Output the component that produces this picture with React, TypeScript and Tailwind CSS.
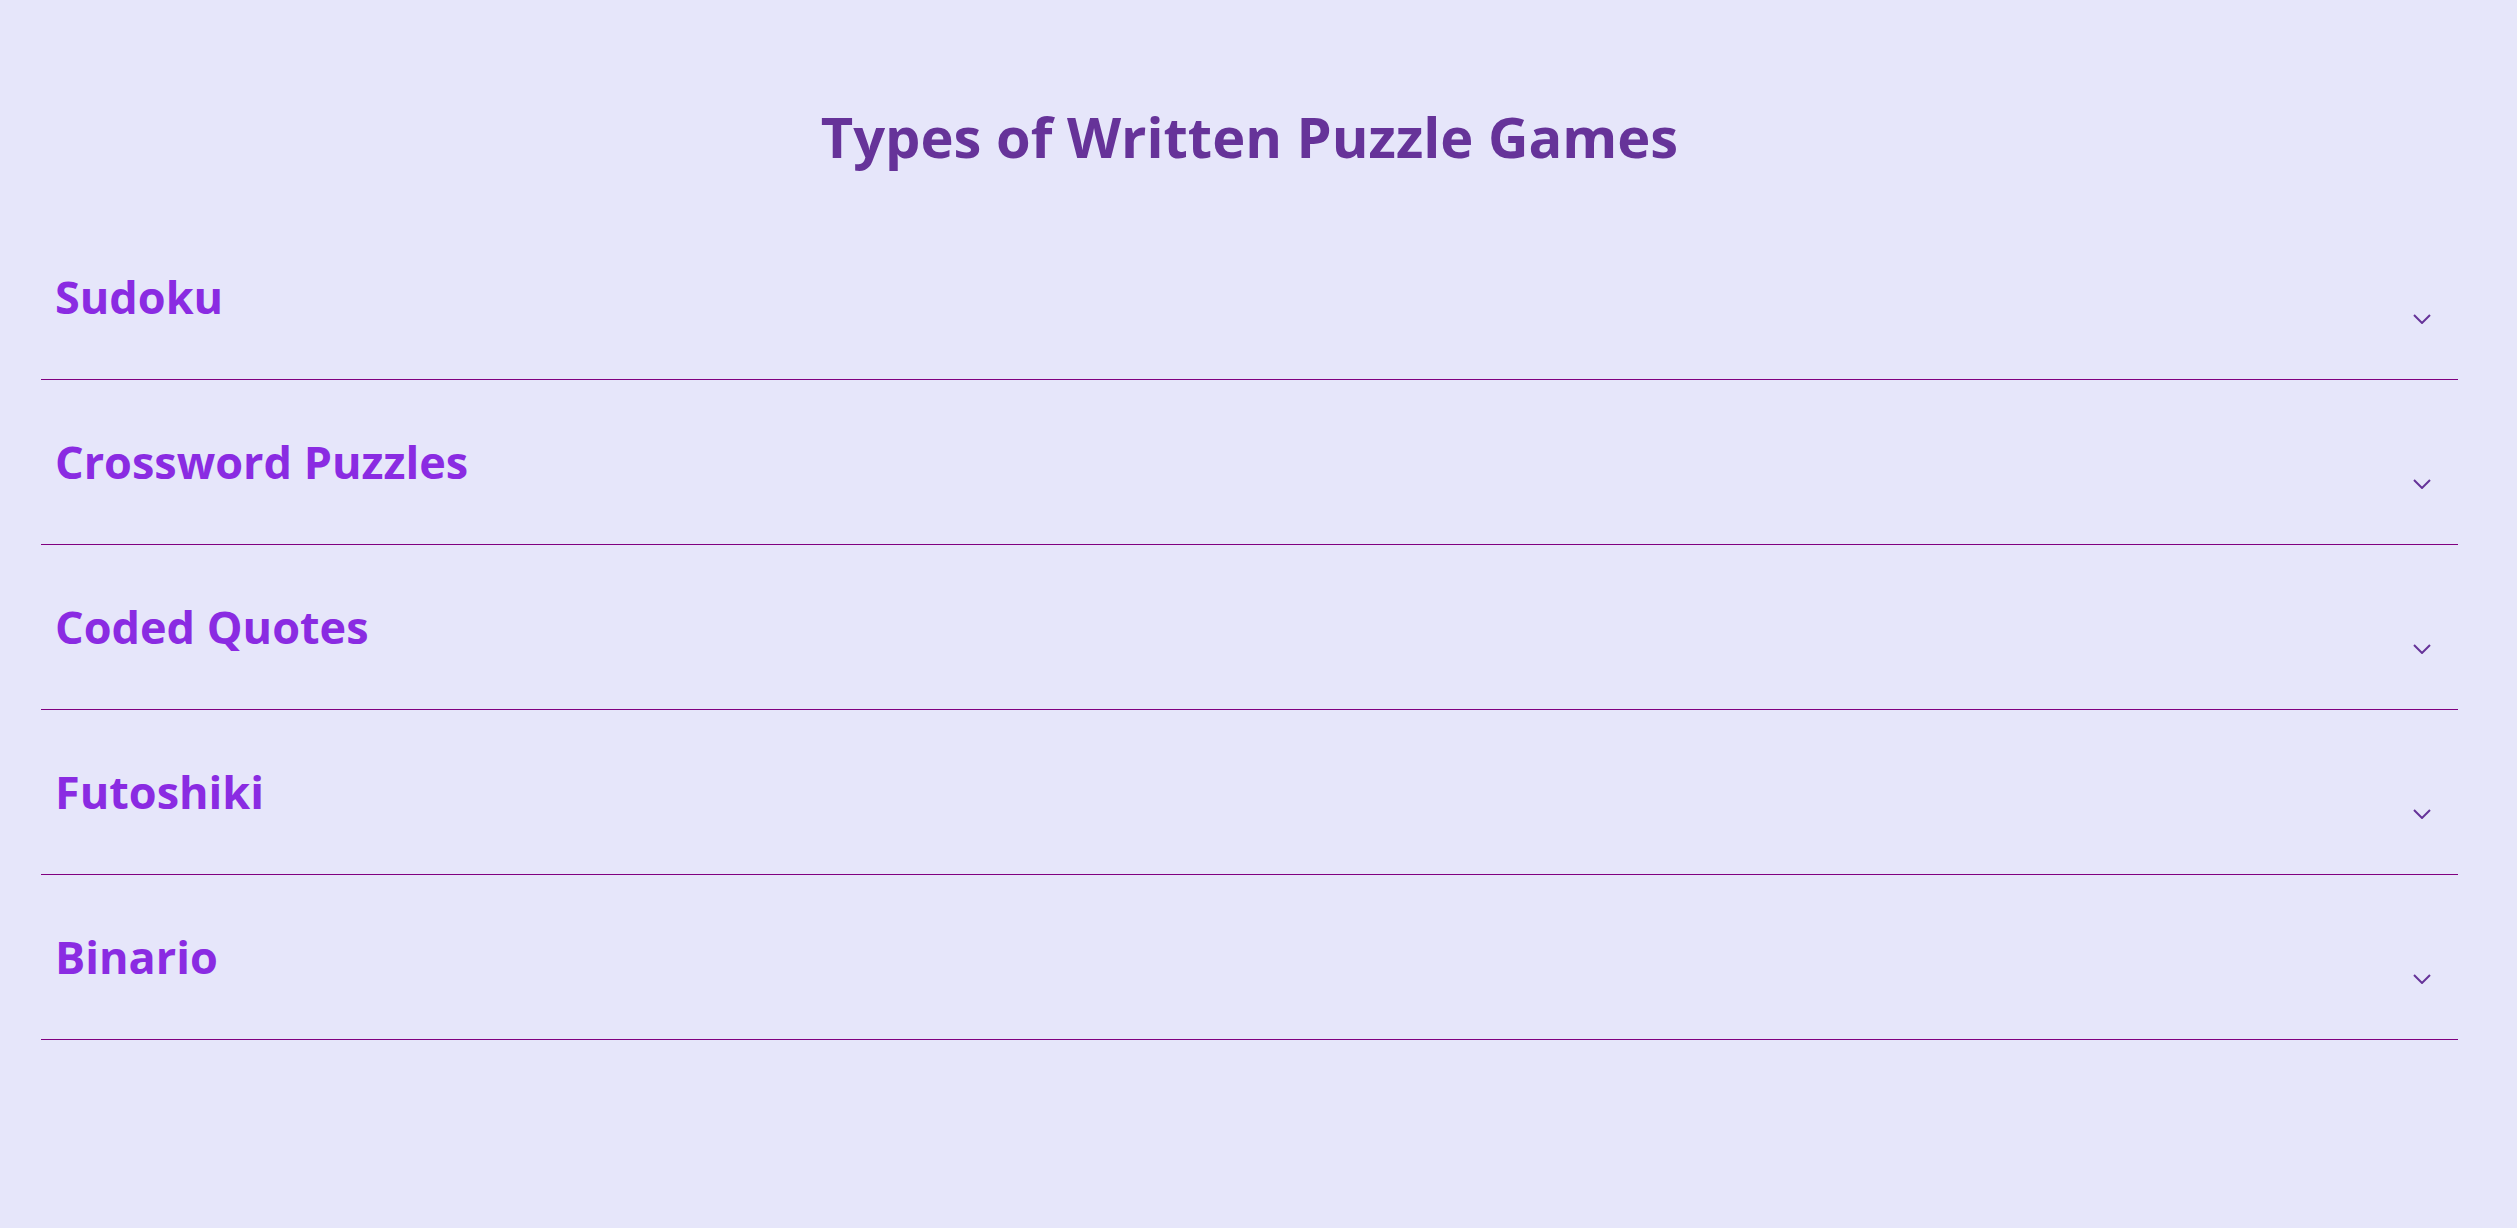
import { useState } from "react";

const puzzles = [
  "Sudoku",
  "Crossword Puzzles",
  "Coded Quotes",
  "Futoshiki",
  "Binario",
];

function Chevron() {
  return (
    <svg width="18" height="10" viewBox="0 0 18 10" className="block">
      <polyline
        points="1,1 9,9 17,1"
        fill="none"
        stroke="#663399"
        strokeWidth="2"
      />
    </svg>
  );
}

export default function App() {
  const [open, setOpen] = useState<number | null>(null);

  return (
    <div
      className="min-h-screen bg-[#e6e6fa] pl-[41px] pr-[59px]"
      style={{ fontFamily: '"Open Sans", "DejaVu Sans", sans-serif' }}
    >
      <h1 className="pt-[99px] text-center text-[56px] font-bold leading-[75px] text-[#663399]">
        Types of Written Puzzle Games
      </h1>

      <div className="mt-[41px]">
        {puzzles.map((name, i) => (
          <div key={name} className="border-b border-[#800080]">
            <button
              onClick={() => setOpen(open === i ? null : i)}
              className="flex w-full items-start justify-between pb-[52px] pl-[14px] pr-[27px] pt-[52px] text-left"
            >
              <span className="text-[45px] font-bold leading-[60px] text-[#8a2be2]">
                {name}
              </span>
              <span className="mt-[47px]">
                <Chevron />
              </span>
            </button>
          </div>
        ))}
      </div>
    </div>
  );
}
